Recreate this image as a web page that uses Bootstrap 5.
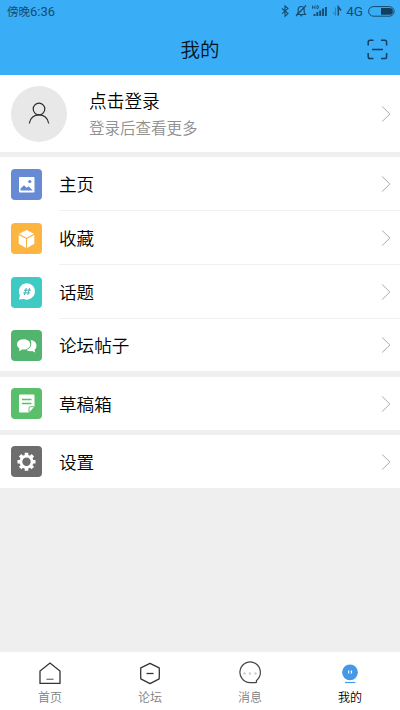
<!DOCTYPE html>
<html lang="zh-CN">
<head>
<meta charset="utf-8">
<meta name="viewport" content="width=device-width, initial-scale=1">
<title>我的</title>
<link href="https://cdn.jsdelivr.net/npm/bootstrap@5.3.0/dist/css/bootstrap.min.css" rel="stylesheet">
<style>
body{font-family:"Noto Sans CJK SC",sans-serif;font-weight:350;background:#efefef;color:#000;height:710px;overflow:hidden;line-height:1}
svg{display:block;flex:none}
.top{background:#39adf5;height:75px}
.status{height:23px;padding:0 5px 0 7px;font-size:12px;color:#164b70}
.status .clock,.status .net{font-family:Roboto,"Noto Sans CJK SC",sans-serif;font-weight:400}
.status .clock{font-size:11.5px;padding-top:1px}
.status .clock b{font-size:13px;font-weight:400}
.status .net{font-size:13.5px;margin:1px 5px 0 3px}
.titlebar{height:52px;grid-template-columns:1fr auto 1fr;padding:0 12px;color:#06131e}
.titlebar h1{font-size:19.5px;font-weight:350}
.profile{height:77px;padding:0 9px 0 11px}
.avatar{width:56px;height:56px;background:#e9e8e9;margin-right:22px}
.login{font-size:17.7px;margin-bottom:10px}
.hint{font-size:15.5px;color:#909090}
.entries{margin-top:5px}
.entries.spaced{margin-top:6px}
.entry{height:54px;padding-left:11px}
.entry:last-child{height:53px}
.tile{width:31px;height:31px;border-radius:4px;margin-right:17px}
.entry-body{font-size:17.6px;padding-right:9px;border-bottom:1px solid #f1f1f1}
.entry:last-child .entry-body{border-bottom:0}
.entry:nth-child(4){height:52px}
.c-blue{background:#668ad4}.c-orange{background:#fcb540}.c-teal{background:#3fcbc4}
.c-green{background:#52b46e}.c-lime{background:#5abf6a}.c-gray{background:#6d6d6d}
.tabs{height:58px;font-size:12px;color:#808080;padding-top:8px}
.tabs svg{margin-bottom:6px}
.tabs .current{color:#000}
</style>
<script src="https://cdn.jsdelivr.net/npm/bootstrap@5.3.0/dist/js/bootstrap.bundle.min.js"></script>
</head>
<body class="d-flex flex-column">
<svg width="0" height="0" class="position-absolute"><defs>
<symbol id="chev" viewBox="0 0 10 18"><path d="M1.200 1.500 8.900 9 1.200 16.500" fill="none" stroke="#aaa" stroke-width="1"/></symbol>
</defs></svg>
<header class="top">
  <div class="status d-flex align-items-center">
    <span class="clock me-auto">傍晚<b>6:36</b></span>
    <svg width="63" height="16" viewBox="280 4 63 16" fill="none" stroke="#164b70" stroke-width="1.100">
      <path d="M282 8.500l6 5-3 2.800V6l3 2.600-6 5"/>
      <path d="M297 14.500h8.500l-1.300-2V9.500c0-4-6-4-6 0v3zM300 15.700h2.500M296 16L306 5.500"/>
      <path d="M312.500 5.500v3.500M312.500 7.200h2.400M315 5.500v3.500M317 5.700v3h1q1.300-1.500 0-3z" stroke-width=".8"/>
      <path d="M314.500 16v-2M317.300 16v-4M320.200 16v-5.500M323 16V8.500M325.900 16V7" stroke-width="1.900"/>
      <path d="M335.500 7.500V15l-2.500-3" stroke="#2f81b7"/>
      <path d="M338.300 15.500V7l2.800 3.500" stroke-width="1.500"/>
    </svg>
    <span class="net">4G</span>
    <svg width="27" height="11" viewBox="0 0 27 11"><rect x=".6" y=".6" width="25.500" height="9.600" rx="4.800" fill="none" stroke="#164b70"/><path d="M13 2h8.500a3.400 3.400 0 0 1 0 6.800H13z" fill="#123f60"/></svg>
  </div>
  <div class="titlebar d-grid align-items-center">
    <span></span>
    <h1 class="m-0">我的</h1>
    <svg class="ms-auto" width="21" height="21" viewBox="0 0 21 21" fill="none" stroke="#123f60" stroke-width="1.500"><path d="M1.200 6.500V3q0-1.800 1.800-1.800h3.500M14 1.200h3.800q1.800 0 1.800 1.800v3.500M19.600 14v3.800q0 1.800-1.800 1.800H14M6.500 19.600H3q-1.800 0-1.800-1.800V14M5 10.500h11"/></svg>
  </div>
</header>
<main class="flex-grow-1">
  <section class="profile bg-white d-flex align-items-center">
    <div class="avatar rounded-circle d-flex align-items-center justify-content-center">
      <svg width="22" height="24" viewBox="0 0 22 24" fill="none" stroke="#2d2d2d" stroke-width="1.200"><circle cx="11" cy="7" r="5.800"/><path d="M1.300 21.500C2.500 10 19.500 10 20.700 21.500"/></svg>
    </div>
    <div class="flex-grow-1"><div class="login">点击登录</div><div class="hint">登录后查看更多</div></div>
    <svg width="10" height="18"><use href="#chev"/></svg>
  </section>
  <section class="entries bg-white">
    <div class="entry d-flex align-items-center">
      <div class="tile c-blue"><svg width="31" height="31" viewBox="0 0 31 31"><rect x="8" y="8" width="15.500" height="15.500" rx=".8" fill="#fff"/><path d="M9.500 21.500v-2l3.500-3.300 2.700 2.600 1.800-1.500 4.300 4.200z" fill="#668ad4"/><circle cx="18.800" cy="12.500" r="1.600" fill="#668ad4"/></svg></div>
      <div class="entry-body flex-grow-1 align-self-stretch d-flex align-items-center justify-content-between">主页<svg width="10" height="18"><use href="#chev"/></svg></div>
    </div>
    <div class="entry d-flex align-items-center">
      <div class="tile c-orange"><svg width="31" height="31" viewBox="0 0 31 31"><path d="M15.500 7l7.500 3.700-7.500 4-7.500-4zM7.700 12l7.200 3.800V25l-7.200-4.200zM23.300 12l-7.200 3.800V25l7.200-4.200z" fill="#fff"/></svg></div>
      <div class="entry-body flex-grow-1 align-self-stretch d-flex align-items-center justify-content-between">收藏<svg width="10" height="18"><use href="#chev"/></svg></div>
    </div>
    <div class="entry d-flex align-items-center">
      <div class="tile c-teal"><svg width="31" height="31" viewBox="0 0 31 31"><path d="M16 6.200a8.200 8.200 0 1 1-3.200 15.800L8 22.500l1-4A8.200 8.200 0 0 1 16 6.200z" fill="#fff"/><path d="M15.400 11l-2 7M18.700 11l-2 7M13 13.200h6.800M12.200 15.900H19" stroke="#3fb0b5" stroke-width="1"/></svg></div>
      <div class="entry-body flex-grow-1 align-self-stretch d-flex align-items-center justify-content-between">话题<svg width="10" height="18"><use href="#chev"/></svg></div>
    </div>
    <div class="entry d-flex align-items-center">
      <div class="tile c-green"><svg width="31" height="31" viewBox="0 0 31 31" fill="#fff"><path d="M19.500 10c7 .5 7.300 8 4 9.800l.8 2.700-3.300-1.500c-2.500.5-4.500 0-5.500-1 4-1.500 6-5.500 4-10z"/><path d="M12.700 9.300c8.500 0 9 10 0 10.300l-1.500-.1-3.200 1.700.5-2.700c-4.500-2.500-3-9.200 4.200-9.200z"/></svg></div>
      <div class="entry-body flex-grow-1 align-self-stretch d-flex align-items-center justify-content-between">论坛帖子<svg width="10" height="18"><use href="#chev"/></svg></div>
    </div>
  </section>
  <section class="entries spaced bg-white">
    <div class="entry d-flex align-items-center">
      <div class="tile c-lime"><svg width="31" height="31" viewBox="0 0 31 31"><path d="M8 7.500q0-1 1-1h13.500q1 0 1 1v11l-5.500 6H9q-1 0-1-1z" fill="#fff"/><path d="M11 11.500h9.500M11 15.500h9.500" stroke="#5abf6a" stroke-width="1.300"/><path d="M18 24.500v-4.300q0-1.500 1.500-1.500h4" fill="none" stroke="#5abf6a"/></svg></div>
      <div class="entry-body flex-grow-1 align-self-stretch d-flex align-items-center justify-content-between">草稿箱<svg width="10" height="18"><use href="#chev"/></svg></div>
    </div>
  </section>
  <section class="entries bg-white">
    <div class="entry d-flex align-items-center">
      <div class="tile c-gray"><svg width="31" height="31" viewBox="0 0 31 31" fill="none" stroke="#fff"><circle cx="15.500" cy="15.700" r="5.600" stroke-width="2.800"/><path d="M15.500 6.700v3M15.500 21.700v3M6.500 15.700h3M21.500 15.700h3M9.140 9.340l2.100 2.100M19.760 19.960l2.100 2.100M9.140 22.060l2.100-2.100M19.760 11.440l2.100-2.100" stroke-width="3.600"/></svg></div>
      <div class="entry-body flex-grow-1 align-self-stretch d-flex align-items-center justify-content-between">设置<svg width="10" height="18"><use href="#chev"/></svg></div>
    </div>
  </section>
</main>
<nav class="tabs bg-white row g-0 text-center">
  <div class="col d-flex flex-column align-items-center"><svg width="24" height="25" viewBox="0 0 24 25" fill="none" stroke="#333" stroke-width="1.300"><path d="M2 23.300V11L12 3l10 8v12.300z"/><path d="M8.500 19.300h7" stroke="#777"/></svg>首页</div>
  <div class="col d-flex flex-column align-items-center"><svg width="24" height="25" viewBox="0 0 24 25" fill="none" stroke="#333" stroke-width="1.300"><path d="M12 3.300l9.200 4.500q.3 5.500 0 11L12 23.600l-9.200-4.800q-.3-5.500 0-11z" stroke-linejoin="round"/><path d="M8.500 13.500h7"/></svg>论坛</div>
  <div class="col d-flex flex-column align-items-center"><svg width="24" height="25" viewBox="0 0 24 25" fill="none" stroke="#444" stroke-width="1.200"><path d="M17.500 22.700H12A10.200 10.400 0 1 1 19 20q-1 .8-.5 1.600.3 1.100-1 1.100z"/><g fill="#ccc" stroke="none"><circle cx="6.500" cy="13.500" r="1.200"/><circle cx="12" cy="13.500" r="1.200"/><circle cx="17.500" cy="13.500" r="1.200"/></g></svg>消息</div>
  <div class="col d-flex flex-column align-items-center current"><svg width="24" height="25" viewBox="0 0 24 25"><circle cx="12" cy="12.300" r="7.900" fill="#4698e6"/><path d="M10.700 10.500v3M13.500 10.500v3" stroke="#fff" stroke-width="1.200"/><path d="M7 22.500h10.300" stroke="#4698e6" stroke-width="1.200"/></svg>我的</div>
</nav>
</body>
</html>
